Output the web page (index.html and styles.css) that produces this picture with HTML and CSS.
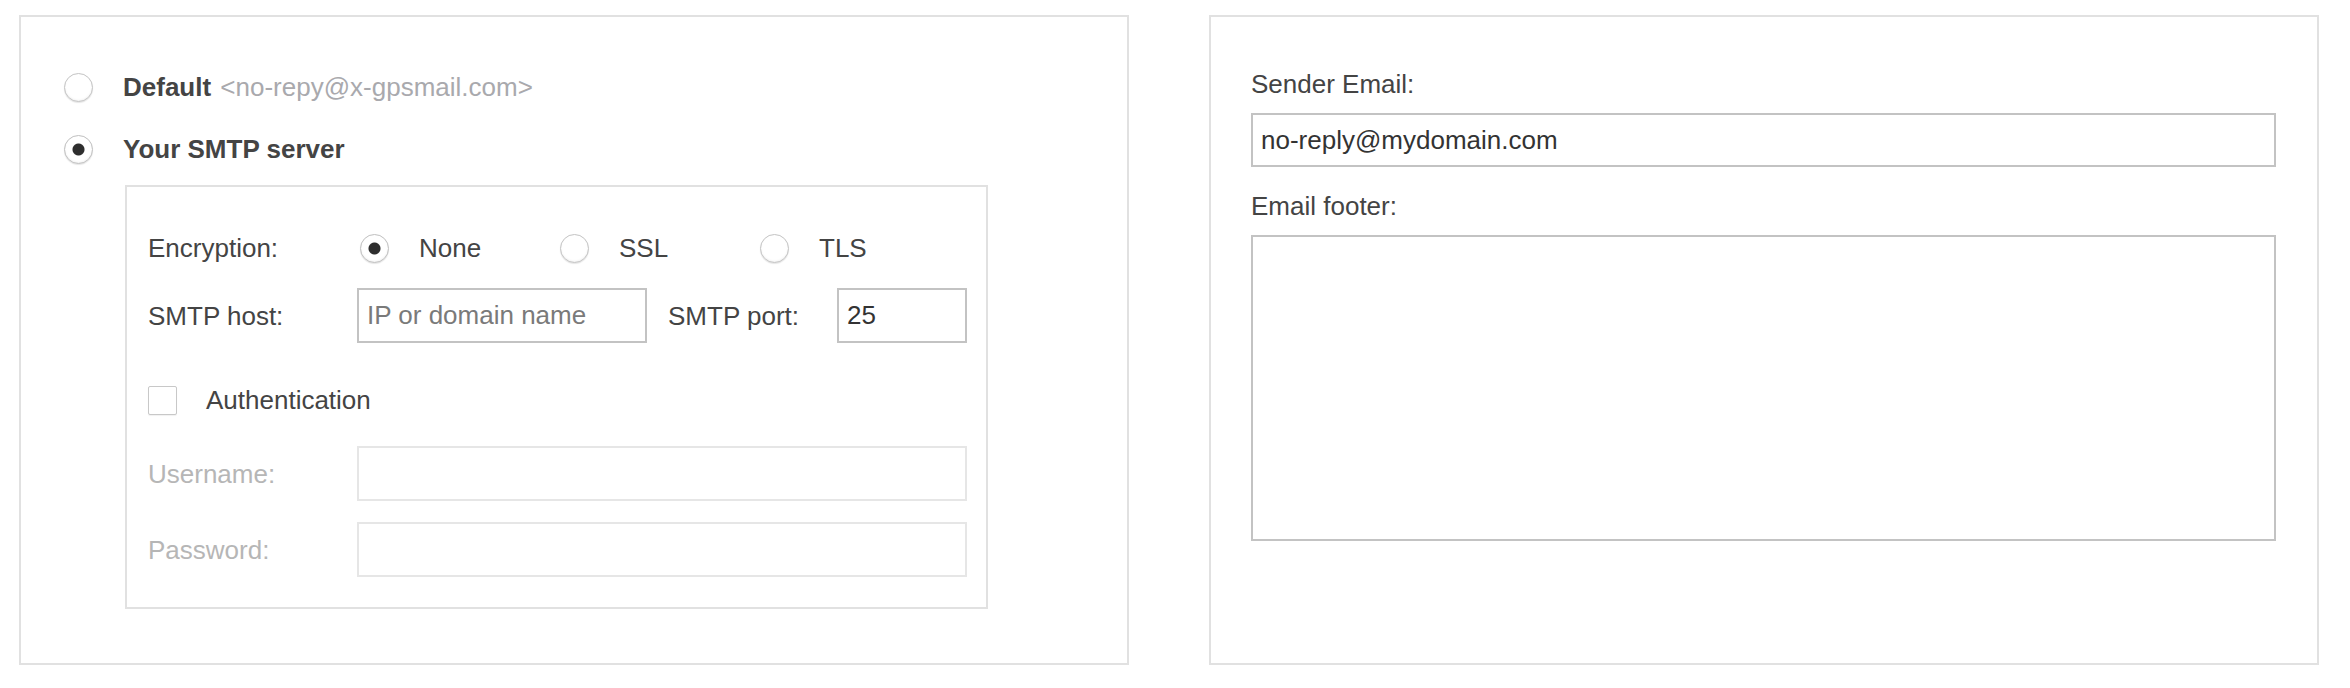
FILE: index.html
```html
<!DOCTYPE html>
<html lang="en">
<head>
<meta charset="utf-8">
<title>Email settings</title>
<link rel="stylesheet" href="styles.css">
</head>
<body>
<div class="page">
  <section class="panel panel-left">
    <label class="opt-row">
      <input type="radio" name="server" class="radio">
      <span><b>Default</b> <span class="muted">&lt;no-repy@x-gpsmail.com&gt;</span></span>
    </label>
    <label class="opt-row">
      <input type="radio" name="server" class="radio" checked>
      <b>Your SMTP server</b>
    </label>
    <div class="smtp-box">
      <div class="form-row enc-row">
        <span class="lbl">Encryption:</span>
        <label class="enc-opt"><input type="radio" name="enc" class="radio" checked><span>None</span></label>
        <label class="enc-opt"><input type="radio" name="enc" class="radio"><span>SSL</span></label>
        <label class="enc-opt"><input type="radio" name="enc" class="radio"><span>TLS</span></label>
      </div>
      <div class="form-row host-row">
        <span class="lbl">SMTP host:</span>
        <input type="text" class="field host" placeholder="IP or domain name">
        <span class="port-lbl">SMTP port:</span>
        <input type="text" class="field port" value="25">
      </div>
      <label class="check-row">
        <input type="checkbox" class="check">
        <span>Authentication</span>
      </label>
      <div class="form-row dis first-dis">
        <span class="lbl">Username:</span>
        <input type="text" class="field wide" disabled>
      </div>
      <div class="form-row dis">
        <span class="lbl">Password:</span>
        <input type="password" class="field wide" disabled>
      </div>
    </div>
  </section>
  <section class="panel panel-right">
    <label class="r-label" for="sender">Sender Email:</label>
    <input type="text" id="sender" class="field r-input" value="no-reply@mydomain.com">
    <label class="r-label footer-label" for="footer">Email footer:</label>
    <textarea id="footer" class="field r-area"></textarea>
  </section>
</div>
</body>
</html>
```
FILE: styles.css
```css
body {
  margin: 0;
  background: #ffffff;
  font-family: "Liberation Sans", Arial, Helvetica, sans-serif;
  font-size: 26px;
  color: #444444;
}

.page {
  display: flex;
  gap: 80px;
  padding: 15px 31px 0 19px;
}

.panel {
  box-sizing: border-box;
  width: 1110px;
  height: 650px;
  border: 2px solid #e1e1e1;
  flex: none;
}

.panel-left {
  padding: 50px 0 0 43px;
}

.opt-row {
  display: flex;
  align-items: center;
  height: 40px;
  gap: 30px;
  line-height: 30px;
}

.opt-row + .opt-row {
  margin-top: 22px;
}

.muted {
  color: #a9a9ad;
  font-weight: normal;
  margin-left: 2px;
}

.radio {
  appearance: none;
  -webkit-appearance: none;
  flex: none;
  margin: 0;
  width: 29px;
  height: 29px;
  box-sizing: border-box;
  border-radius: 50%;
  border: 1.5px solid #c4c4c4;
  background: #ffffff;
  box-shadow: inset 0 -1px 2px rgba(0, 0, 0, 0.06), 0 1px 1px rgba(0, 0, 0, 0.1);
}

.radio:checked {
  background: radial-gradient(circle, #2e2e2e 0 5.5px, transparent 6.5px) #ffffff;
  border-color: #c0c0c0;
}

.smtp-box {
  box-sizing: border-box;
  margin: 16px 0 0 61px;
  width: 863px;
  height: 424px;
  border: 2px solid #e1e1e1;
  padding: 41px 0 0 21px;
}

.form-row {
  display: flex;
  align-items: center;
  line-height: 30px;
}

.lbl {
  flex: none;
  width: 209px;
}

.enc-row {
  height: 40px;
}

.enc-opt {
  display: flex;
  align-items: center;
  width: 200px;
  flex: none;
}

.enc-opt .radio {
  margin: 0 30px 0 3px;
}

.host-row {
  margin-top: 20px;
  height: 55px;
}

.field {
  box-sizing: border-box;
  margin: 0;
  height: 55px;
  border: 2px solid #c3c3c3;
  border-radius: 0;
  padding: 0 8px;
  background: #ffffff;
  font: inherit;
  color: #333333;
  outline: none;
  flex: none;
}

.field::placeholder {
  color: #7a7a7a;
}

.host {
  width: 290px;
}

.port-lbl {
  flex: none;
  margin-left: 21px;
  width: 169px;
}

.port {
  width: 130px;
}

.check-row {
  display: flex;
  align-items: center;
  height: 40px;
  gap: 29px;
  margin-top: 37px;
  line-height: 30px;
}

.check {
  appearance: none;
  -webkit-appearance: none;
  flex: none;
  margin: 0;
  width: 29px;
  height: 29px;
  box-sizing: border-box;
  border: 1.5px solid #c8c8c8;
  border-radius: 2px;
  background: #ffffff;
  box-shadow: 0 1px 1px rgba(0, 0, 0, 0.06);
}

.dis {
  color: #b6b6b6;
  margin-top: 21px;
}

.first-dis {
  margin-top: 26px;
}

.wide {
  width: 610px;
  border-color: #e6e6e6;
}

.panel-right {
  padding: 52px 41px 0 40px;
}

.r-label {
  display: block;
  line-height: 30px;
}

.r-input {
  display: block;
  width: 100%;
  height: 54px;
  margin-top: 14px;
}

.footer-label {
  margin-top: 24px;
}

.r-area {
  display: block;
  width: 100%;
  height: 306px;
  margin-top: 14px;
  resize: none;
  padding: 8px;
}
```
